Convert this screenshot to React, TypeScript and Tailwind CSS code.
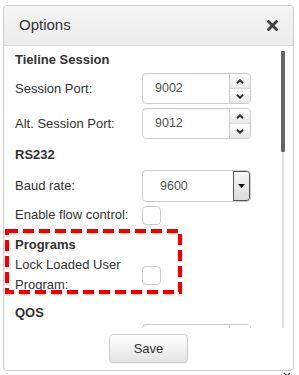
import React from 'react';

const font = { fontFamily: '"Liberation Sans", Arial, sans-serif' };

const Spinner: React.FC<{ value: string }> = ({ value }) => (
  <div className="flex h-[31px] w-[109px] overflow-hidden rounded-[4px] border border-[#cccccc] bg-white shadow-[inset_0_1px_1px_rgba(0,0,0,0.06)]">
    <div className="flex flex-1 items-center pl-[12px] text-[12.5px] text-[#555]">{value}</div>
    <div className="flex w-[21px] flex-col border-l border-[#cccccc]">
      <div className="flex flex-1 items-center justify-center border-b border-[#dddddd] bg-gradient-to-b from-[#ffffff] to-[#e9e9e9]">
        <svg width="8" height="5" viewBox="0 0 8 5">
          <path d="M1 4.2 L4 1.2 L7 4.2" fill="none" stroke="#333" strokeWidth="2" />
        </svg>
      </div>
      <div className="flex flex-1 items-center justify-center bg-gradient-to-b from-[#ffffff] to-[#e9e9e9]">
        <svg width="8" height="5" viewBox="0 0 8 5">
          <path d="M1 0.8 L4 3.8 L7 0.8" fill="none" stroke="#333" strokeWidth="2" />
        </svg>
      </div>
    </div>
  </div>
);

const Checkbox: React.FC = () => (
  <div className="h-[19px] w-[19px] rounded-[4px] border border-[#cccccc] bg-white" />
);

const Heading: React.FC<{ children: React.ReactNode; className?: string }> = ({ children, className }) => (
  <div className={`h-[20px] text-[13px] font-bold leading-[20px] text-[#333] ${className ?? ''}`}>{children}</div>
);

const Row: React.FC<{ label: React.ReactNode; className?: string; children: React.ReactNode }> = ({ label, className, children }) => (
  <div className={`flex items-center ${className ?? ''}`}>
    <div className="w-[127px] text-[13px] leading-[20px] text-[#333]">{label}</div>
    {children}
  </div>
);

export default function App() {
  return (
    <div className="h-[375px] w-[299px] overflow-hidden bg-white pl-[3px] pt-[5px]" style={font}>
      <div className="relative flex h-[366px] w-[291px] flex-col rounded-[4px] border border-[#cccccc] bg-white">
        {/* header */}
        <div className="flex h-[40px] shrink-0 items-center justify-between rounded-t-[4px] border-b border-[#dddddd] bg-gradient-to-b from-[#f5f5f5] to-[#ececec] pl-[15px] pr-[15px]">
          <span className="text-[15px] text-[#333]">Options</span>
          <svg width="11" height="11" viewBox="0 0 11 11">
            <path d="M1.5 1.5 L9.5 9.5 M9.5 1.5 L1.5 9.5" stroke="#444" strokeWidth="2.8" strokeLinecap="square" />
          </svg>
        </div>

        {/* body */}
        <div className="flex h-[282px] shrink-0">
          <div className="relative flex-1 overflow-hidden pl-[11px] pt-[4px]">
            <Heading>Tieline Session</Heading>
            <Row label="Session Port:" className="mt-[3px]">
              <Spinner value="9002" />
            </Row>
            <Row label="Alt. Session Port:" className="mt-[4px]">
              <Spinner value="9012" />
            </Row>
            <Heading className="mt-[6px]">RS232</Heading>
            <Row label="Baud rate:" className="mt-[5px]">
              <div className="flex h-[32px] w-[109px] overflow-hidden rounded-[4px] border border-[#cccccc] bg-white">
                <div className="flex flex-1 items-center pl-[17px] text-[12.5px] text-[#555]">9600</div>
                <div className="flex w-[17px] items-center justify-center rounded-r-[3px] border border-[#555] bg-gradient-to-b from-[#f6f6f6] to-[#dcdcdc]">
                  <svg width="7" height="4" viewBox="0 0 7 4">
                    <path d="M0 0 L7 0 L3.5 4 Z" fill="#111" />
                  </svg>
                </div>
              </div>
            </Row>
            <Row label="Enable flow control:" className="mt-[3px]">
              <Checkbox />
            </Row>
            <Heading className="mt-[10px]">Programs</Heading>
            <Row label={<>Lock Loaded User<br />Program:</>}>
              <Checkbox />
            </Row>
            <Heading className="mt-[8px]">QOS</Heading>
            <Row label="" className="mt-[1px]">
              <div className="h-[31px] w-[109px] rounded-[4px] border border-[#cccccc] bg-white">
                <div className="ml-auto h-full w-[21px] border-l border-[#cccccc] bg-gradient-to-b from-[#ffffff] to-[#e9e9e9]" />
              </div>
            </Row>

            {/* annotation */}
            <svg className="pointer-events-none absolute left-[1px] top-[183px]" width="178" height="66" viewBox="0 0 178 66" style={{ filter: 'drop-shadow(0 1px 1px rgba(0,0,0,0.25))' }}>
              <rect x="2" y="2" width="173" height="61" fill="none" stroke="#ee0000" strokeWidth="4" strokeDasharray="11 5" />
            </svg>
          </div>
          <div className="flex w-[15px] shrink-0 justify-start pl-[3px] pt-[5px]">
            <div className="flex w-[4px] flex-col items-center">
              <div className="h-[101px] w-[4px] rounded-[1px] bg-[#666]" />
              <div className="w-[2px] flex-1 bg-[#dddddd]" />
            </div>
          </div>
        </div>

        {/* footer */}
        <div className="flex flex-1 justify-center pt-[6px]">
          <button className="h-[29px] w-[79px] rounded-[4px] border border-[#cccccc] bg-gradient-to-b from-[#ffffff] to-[#e4e4e4] text-[13px] text-[#333] shadow-[0_1px_1px_rgba(0,0,0,0.05)]">
            Save
          </button>
        </div>

        <svg className="absolute right-[2px] top-[366px]" width="8" height="5" viewBox="0 0 8 5">
          <path d="M1 1 L4 4 L7 1" fill="none" stroke="#334" strokeWidth="1.2" />
        </svg>
      </div>
    </div>
  );
}
